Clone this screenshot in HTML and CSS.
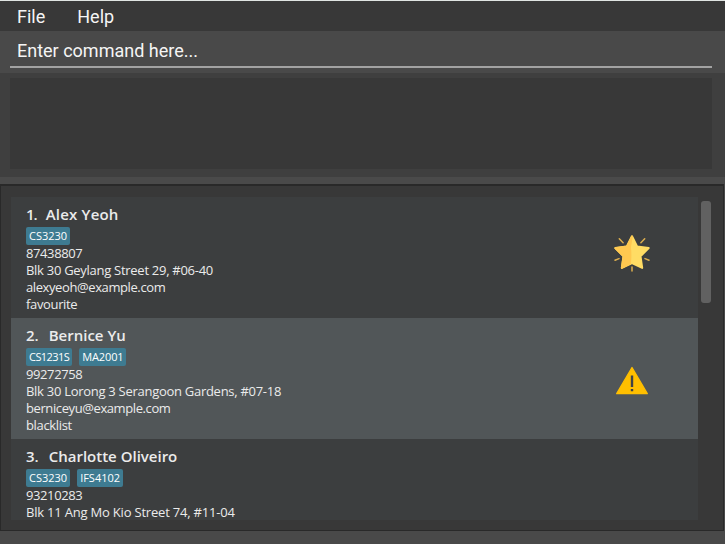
FILE: index.html
```
<!DOCTYPE html>
<html lang="en">
<head>
<meta charset="utf-8">
<title>Address Book</title>
<link rel="stylesheet" href="styles.css">
</head>
<body>
<nav class="menu"><span>File</span><span>Help</span></nav>
<div class="command"><div class="field">Enter command here...</div></div>
<div class="result"><div class="display"></div></div>
<div class="divider"></div>
<main class="panel">
  <div class="list">
    <article class="card">
      <div class="details">
        <h2 class="first"><span class="index">1.</span><span class="name">Alex Yeoh</span></h2>
        <div class="tags"><span class="tag">CS3230</span></div>
        <p class="phone">87438807</p>
        <p class="address">Blk 30 Geylang Street 29, #06-40</p>
        <p class="email">alexyeoh@example.com</p>
        <p class="status">favourite</p>
      </div>
      <svg class="icon" viewBox="0 0 40 40">
        <path d="M7.3 5.7l3.8 4M32.7 5.7l-3.8 4M3 27.3l4-1.7M37 27.3l-4-1.7M20 34v4" stroke="#dcae4e" stroke-width="1.5" stroke-linecap="round"/>
        <path d="M20 3.3l5.1 10.1 11.6 1.7-8.2 8.1 1.7 11.7L20 30l-10.2 4.9 1.7-11.7-8.2-8.1 11.6-1.7z" fill="#ffdc64" stroke="#ffdc64" stroke-width="2" stroke-linejoin="round"/>
        <path d="M20 3.3l-5.1 10.1-11.6 1.7 8.2 8.1-1.7 11.7 8.2-4.3Q19 22 18 14z" fill="#ffc850" stroke="#ffc850" stroke-width="1.8" stroke-linejoin="round"/>
      </svg>
    </article>
    <article class="card alternate">
      <div class="details">
        <h2><span class="index">2.</span><span class="name">Bernice Yu</span></h2>
        <div class="tags"><span class="tag tight">CS1231S</span><span class="tag snug">MA2001</span></div>
        <p class="phone">99272758</p>
        <p class="address">Blk 30 Lorong 3 Serangoon Gardens, #07-18</p>
        <p class="email">berniceyu@example.com</p>
        <p class="status">blacklist</p>
      </div>
      <svg class="icon warning" viewBox="0 0 40 40">
        <path d="M20 7.5L35.3 33.7H4.7z" fill="#ffbf00" stroke="#ffbf00" stroke-width="1.3" stroke-linejoin="round"/>
        <path d="M18.8 15.5h2.4v11.6h-2.4zM18.8 29h2.4v2.3h-2.4z" fill="#3f4246"/>
      </svg>
    </article>
    <article class="card">
      <div class="details">
        <h2><span class="index">3.</span><span class="name">Charlotte Oliveiro</span></h2>
        <div class="tags"><span class="tag">CS3230</span><span class="tag">IFS4102</span></div>
        <p class="phone">93210283</p>
        <p class="address loose">Blk 11 Ang Mo Kio Street 74, #11-04</p>
      </div>
    </article>
  </div>
  <div class="scrollbar"><div class="thumb"></div></div>
</main>
<footer class="footer"></footer>
</body>
</html>
```
FILE: styles.css
```
* { box-sizing: border-box; }
body {
  margin: 0;
  width: 725px;
  height: 544px;
  overflow: hidden;
  display: flex;
  flex-direction: column;
  background: #494949;
  color: #f5f5f5;
  font-family: "Open Sans", "Noto Sans", sans-serif;
}
.menu {
  height: 31px;
  border-top: 1px solid #e0e5e2;
  background: #383838;
  display: flex;
  gap: 32px;
  padding-left: 17px;
  font: 18px/32px Roboto, sans-serif;
}
.command {
  height: 42px;
  padding: 0 13px 0 10px;
  background: #494949;
}
.field {
  height: 37px;
  padding-left: 7px;
  border-bottom: 2px solid #a2a2a2;
  font: 18px/39px Roboto, sans-serif;
}
.result {
  height: 104px;
  padding: 5px 13px 8px 10px;
  background: #3f3f3f;
}
.display { height: 91px; background: #383838; }
.divider { height: 7px; background: #4a4a4a; }
.panel {
  height: 347px;
  width: 724px;
  border: 1px solid #292929;
  border-top-width: 2px;
  background: #383838;
  padding: 11px 0 10px 10px;
  display: flex;
}
.list { width: 687px; height: 323px; overflow: hidden; background: #3c3e3f; }
.card {
  height: 121px;
  padding: 7px 46px 0 15px;
  display: flex;
  justify-content: space-between;
}
.alternate { background: #515658; }
.details { color: #ebebeb; white-space: nowrap; }
h2 {
  margin: 0;
  height: 22px;
  display: flex;
  gap: 10px;
  font-size: 15px;
  line-height: 21px;
  font-weight: 600;
}
.first { gap: 9px; }
.first .index { letter-spacing: -1px; }
.first .name { letter-spacing: 0.2px; }
.tags { display: flex; gap: 7px; height: 18px; margin-top: 1px; }
.tag {
  height: 18px;
  padding: 0 3px;
  border-radius: 2px;
  background: #3e7b91;
  color: #fff;
  font-size: 11px;
  line-height: 18px;
}
.tight { letter-spacing: -0.55px; }
.snug { letter-spacing: -0.15px; }
p { margin: 0; font-size: 13px; line-height: 17px; letter-spacing: -0.4px; }
.address { letter-spacing: -0.28px; }
.loose { letter-spacing: -0.2px; }
.status { letter-spacing: -0.35px; }
.icon { width: 40px; height: 40px; margin-top: 29px; }
.warning { margin-top: 35px; }
.scrollbar { padding: 4px 0 0 3px; }
.thumb { width: 10px; height: 102px; border-radius: 3px; background: #616161; }
.footer { flex: 1; background: #494949; }
```
